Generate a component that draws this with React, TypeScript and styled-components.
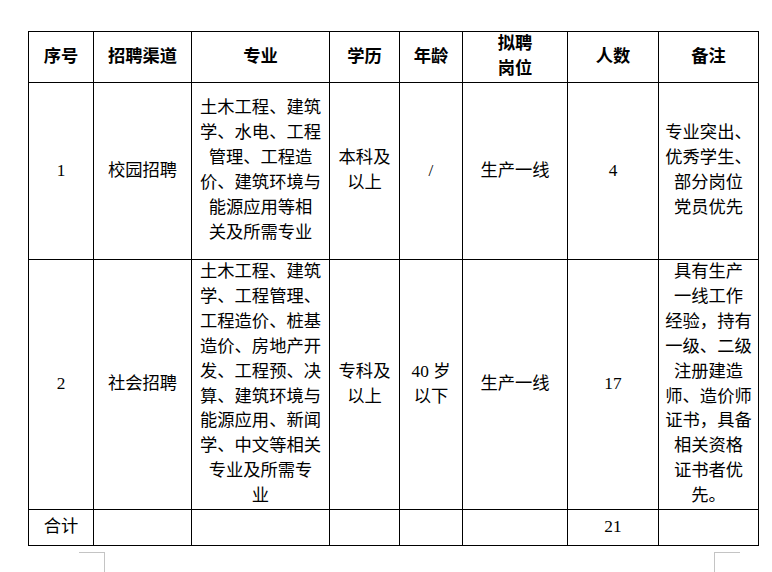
import styled, { createGlobalStyle } from "styled-components";

const GlobalStyle = createGlobalStyle`
  html, body {
    margin: 0;
    padding: 0;
    background: #ffffff;
  }
  body {
    font-family: "Liberation Serif", "Noto Sans CJK SC", serif;
    color: #000000;
  }
`;

interface Row {
  no: string;
  channel: string;
  major: string[];
  degree: string[];
  age: string[];
  post: string;
  count: string;
  note: string[];
}

const rows: Row[] = [
  {
    no: "1",
    channel: "校园招聘",
    major: [
      "土木工程、建筑",
      "学、水电、工程",
      "管理、工程造",
      "价、建筑环境与",
      "能源应用等相",
      "关及所需专业",
    ],
    degree: ["本科及", "以上"],
    age: ["/"],
    post: "生产一线",
    count: "4",
    note: ["专业突出、", "优秀学生、", "部分岗位", "党员优先"],
  },
  {
    no: "2",
    channel: "社会招聘",
    major: [
      "土木工程、建筑",
      "学、工程管理、",
      "工程造价、桩基",
      "造价、房地产开",
      "发、工程预、决",
      "算、建筑环境与",
      "能源应用、新闻",
      "学、中文等相关",
      "专业及所需专",
      "业",
    ],
    degree: ["专科及", "以上"],
    age: ["40 岁", "以下"],
    post: "生产一线",
    count: "17",
    note: [
      "具有生产",
      "一线工作",
      "经验，持有",
      "一级、二级",
      "注册建造",
      "师、造价师",
      "证书，具备",
      "相关资格",
      "证书者优",
      "先。",
    ],
  },
];

const colWidths = [65, 98, 138, 70, 63, 105, 91, 100];
const headers: string[][] = [
  ["序号"],
  ["招聘渠道"],
  ["专业"],
  ["学历"],
  ["年龄"],
  ["拟聘", "岗位"],
  ["人数"],
  ["备注"],
];

const Page = styled.div`
  padding: 31px 0 0 28px;
`;

const Table = styled.table`
  border-collapse: collapse;
  table-layout: fixed;
  width: 731px;
  font-size: 17.3px;
  line-height: 24.9px;
`;

const Tr = styled.tr<{ $h: number }>`
  height: ${(p) => p.$h}px;
`;

const Th = styled.th`
  border: 1px solid #000;
  padding: 0 4px;
  font-weight: 700;
  text-align: center;
  vertical-align: middle;
`;

const Td = styled.td`
  border: 1px solid #000;
  padding: 0 4px;
  font-weight: 400;
  text-align: center;
  vertical-align: middle;
`;

const Line = styled.span`
  display: block;
  white-space: nowrap;
`;

const MarkRow = styled.div`
  display: flex;
  justify-content: space-between;
  width: 661px;
  margin: 6px 0 0 51px;
`;

const Mark = styled.div<{ $side: "left" | "right" }>`
  width: 25px;
  height: 20px;
  border-top: 1px solid #c4c4c4;
  ${(p) =>
    p.$side === "left"
      ? "border-right: 1px solid #c4c4c4;"
      : "border-left: 1px solid #c4c4c4;"}
`;

const Lines = ({ items }: { items: string[] }) => (
  <>
    {items.map((t, i) => (
      <Line key={i}>{t}</Line>
    ))}
  </>
);

export default function App() {
  return (
    <>
      <GlobalStyle />
      <Page>
        <Table>
          <colgroup>
            {colWidths.map((w, i) => (
              <col key={i} style={{ width: w }} />
            ))}
          </colgroup>
          <thead>
            <Tr $h={51}>
              {headers.map((h, i) => (
                <Th key={i}>
                  <Lines items={h} />
                </Th>
              ))}
            </Tr>
          </thead>
          <tbody>
            {rows.map((r, i) => (
              <Tr key={r.no} $h={i === 0 ? 177 : 250}>
                <Td>{r.no}</Td>
                <Td>{r.channel}</Td>
                <Td>
                  <Lines items={r.major} />
                </Td>
                <Td>
                  <Lines items={r.degree} />
                </Td>
                <Td>
                  <Lines items={r.age} />
                </Td>
                <Td>{r.post}</Td>
                <Td>{r.count}</Td>
                <Td>
                  <Lines items={r.note} />
                </Td>
              </Tr>
            ))}
            <Tr $h={36}>
              <Td>合计</Td>
              <Td />
              <Td />
              <Td />
              <Td />
              <Td />
              <Td>21</Td>
              <Td />
            </Tr>
          </tbody>
        </Table>
        <MarkRow>
          <Mark $side="left" />
          <Mark $side="right" />
        </MarkRow>
      </Page>
    </>
  );
}
